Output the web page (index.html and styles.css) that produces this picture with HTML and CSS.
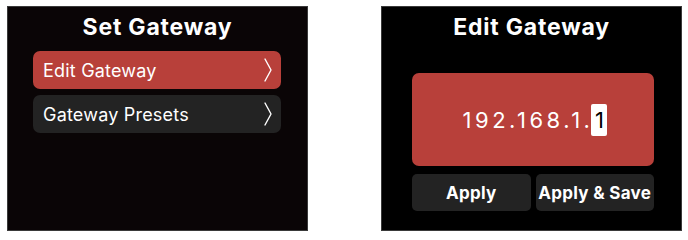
FILE: index.html
```html
<!DOCTYPE html>
<html>
<head>
<meta charset="utf-8">
<link rel="stylesheet" href="styles.css">
</head>
<body>
<div class="page">
  <section class="screen screen-left">
    <h1 class="title">Set Gateway</h1>
    <ul class="menu">
      <li class="item item-active">
        <span class="item-label">Edit Gateway</span>
        <svg class="chev" width="8" height="24" viewBox="0 0 8 24"><polyline points="1,1 7,12 1,23" fill="none" stroke="#fff" stroke-width="1.4" stroke-linejoin="round" stroke-linecap="round"/></svg>
      </li>
      <li class="item">
        <span class="item-label">Gateway Presets</span>
        <svg class="chev" width="8" height="24" viewBox="0 0 8 24"><polyline points="1,1 7,12 1,23" fill="none" stroke="#fff" stroke-width="1.4" stroke-linejoin="round" stroke-linecap="round"/></svg>
      </li>
    </ul>
  </section>
  <section class="screen screen-right">
    <h1 class="title">Edit Gateway</h1>
    <div class="ipbox">
      <span class="ip">192.168.1.<span class="cursor">1</span></span>
    </div>
    <div class="actions">
      <div class="btn">Apply</div>
      <div class="btn">Apply &amp; Save</div>
    </div>
  </section>
</div>
</body>
</html>
```
FILE: styles.css
```css
html, body {
  margin: 0;
  padding: 0;
  background: #fff;
}
body {
  font-family: Inter, "Noto Sans", sans-serif;
  color: #fff;
}
.page {
  display: flex;
  gap: 73px;
  padding: 6px 0 0 7px;
}
.screen {
  box-sizing: border-box;
  height: 225px;
  border: 1px solid #3a3a3a;
  display: flex;
  flex-direction: column;
}
.screen-left {
  width: 301px;
  background: #0a0506;
}
.screen-right {
  width: 301px;
  background: #000;
}
.title {
  margin: 5px 0 0 0;
  font-size: 23px;
  font-weight: 700;
  line-height: 30px;
  text-align: center;
  letter-spacing: 0.8px;
}
.menu {
  list-style: none;
  margin: 9px 26px 0 25px;
  padding: 0;
  display: flex;
  flex-direction: column;
  gap: 6px;
}
.item {
  height: 38px;
  border-radius: 7px;
  background: #232323;
  display: flex;
  align-items: center;
  justify-content: space-between;
  padding: 0 9px 0 10px;
  font-size: 18px;
  letter-spacing: 0.2px;
}
.item-active {
  background: #b8403a;
}
.chev {
  display: block;
}
.ipbox {
  margin: 31px 27px 0 30px;
  height: 93px;
  background: #b8403a;
  border-radius: 7px;
  display: flex;
  align-items: center;
  justify-content: center;
}
.ip {
  font-size: 22px;
  letter-spacing: 3.5px;
  padding-left: 4px;
  display: flex;
  align-items: center;
}
.cursor {
  display: inline-block;
  width: 16px;
  height: 32px;
  line-height: 32px;
  margin-left: -2px;
  text-align: center;
  background: #fff;
  color: #000;
  border-radius: 2px;
  letter-spacing: 0;
}
.actions {
  margin: 8px 27px 0 30px;
  display: grid;
  grid-template-columns: 1fr 1fr;
  gap: 5px;
}
.btn {
  height: 37px;
  border-radius: 5px;
  background: #232323;
  display: flex;
  align-items: center;
  justify-content: center;
  font-size: 17px;
  font-weight: 700;
  letter-spacing: 0.3px;
}
```
